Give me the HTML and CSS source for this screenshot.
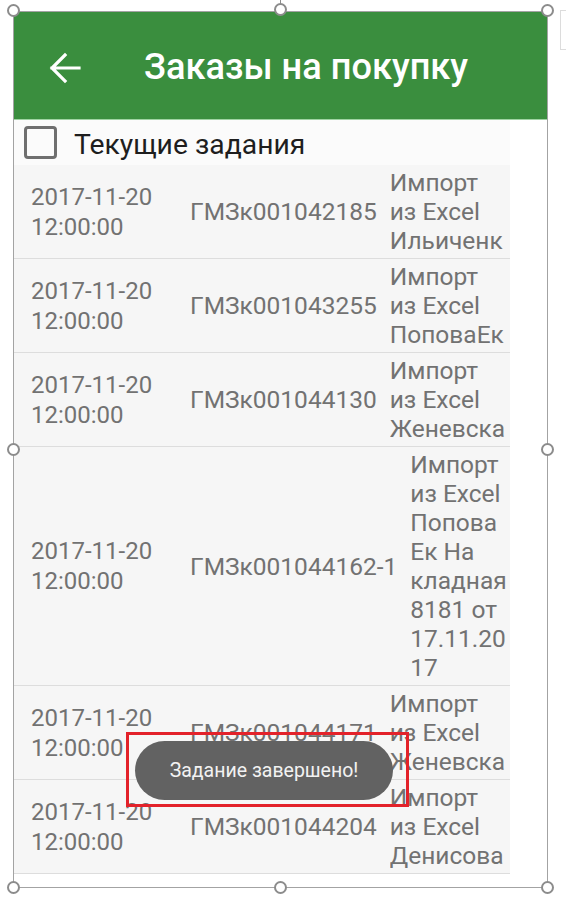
FILE: index.html
```html
<!DOCTYPE html>
<html lang="ru">
<head>
<meta charset="utf-8">
<link rel="stylesheet" href="styles.css">
</head>
<body>
<div class="stage">
  <div class="frame">
    <header class="appbar">
      <svg class="back" width="34" height="34" viewBox="0 0 34 34">
        <path d="M31 17H4M17 4L4 17L17 30" fill="none" stroke="#fff" stroke-width="3.2" stroke-linecap="square"/>
      </svg>
      <h1 class="title">Заказы на покупку</h1>
    </header>
    <div class="filter">
      <span class="checkbox"></span>
      <span class="filter-label">Текущие задания</span>
    </div>
    <div class="list">
      <div class="row">
        <div class="date">2017-11-20<br>12:00:00</div>
        <div class="num">ГМЗк001042185</div>
        <div class="desc">Импорт<br>из Excel<br>Ильиченк</div>
      </div>
      <div class="row">
        <div class="date">2017-11-20<br>12:00:00</div>
        <div class="num">ГМЗк001043255</div>
        <div class="desc">Импорт<br>из Excel<br>ПоповаЕк</div>
      </div>
      <div class="row">
        <div class="date">2017-11-20<br>12:00:00</div>
        <div class="num">ГМЗк001044130</div>
        <div class="desc">Импорт<br>из Excel<br>Женевска</div>
      </div>
      <div class="row">
        <div class="date">2017-11-20<br>12:00:00</div>
        <div class="num">ГМЗк001044162-1</div>
        <div class="desc">Импорт<br>из Excel<br>Попова<br>Ек На<br>кладная<br>8181 от<br>17.11.20<br>17</div>
      </div>
      <div class="row">
        <div class="date">2017-11-20<br>12:00:00</div>
        <div class="num">ГМЗк001044171</div>
        <div class="desc">Импорт<br>из Excel<br>Женевска</div>
      </div>
      <div class="row">
        <div class="date">2017-11-20<br>12:00:00</div>
        <div class="num">ГМЗк001044204</div>
        <div class="desc">Импорт<br>из Excel<br>Денисова</div>
      </div>
    </div>
  </div>

  <div class="toast-mark">
    <div class="toast">Задание завершено!</div>
  </div>

  <span class="rot-line"></span>
  <span class="handle h-tl"></span>
  <span class="handle h-tm"></span>
  <span class="handle h-tr"></span>
  <span class="handle h-ml"></span>
  <span class="handle h-mr"></span>
  <span class="handle h-bl"></span>
  <span class="handle h-bm"></span>
  <span class="handle h-br"></span>
  <span class="side-box"></span>
</div>
</body>
</html>
```

FILE: styles.css
```css
* { box-sizing: border-box; }
html, body { margin: 0; padding: 0; background: #fff; }
body { font-family: Roboto, "Noto Sans", "Liberation Sans", sans-serif; }

.stage { position: relative; width: 566px; height: 900px; overflow: hidden; background: #fff; }

.frame {
  margin: 11px 0 0 13px;
  width: 535px;
  height: 877px;
  border: 1px solid #a3a3a3;
  background: #fff;
  overflow: hidden;
}

.appbar {
  height: 108px;
  background: #3a8e3e;
  border-bottom: 1px solid #9fd3a2;
  display: flex;
  align-items: center;
  padding-left: 34px;
}
.back { display: block; flex: none; margin-top: 4px; }
.title {
  margin: 2px 0 0 62px;
  color: #fff;
  font-size: 36.2px;
  font-weight: 500;
  line-height: 44px;
}

.filter {
  height: 45px;
  display: flex;
  align-items: center;
  padding-left: 10px;
  width: 496px;
  background: #fbfbfb;
}
.checkbox {
  width: 33px; height: 33px;
  border: 3px solid #6f6f6f;
  border-radius: 4px;
  flex: none;
}
.filter-label {
  margin-left: 17px;
  margin-top: 4px;
  font-size: 28.3px;
  color: #1e1e1e;
}

.list { width: 496px; }
.row {
  display: flex;
  align-items: center;
  background: #f6f6f6;
  border-bottom: 1px solid #dddddd;
  padding: 3px 0 3px;
  color: #727272;
  font-size: 24.5px;
  line-height: 29px;
}
.date { width: 176px; flex: none; padding-left: 17px; line-height: 30px; font-size: 24px; }
.num { flex: none; white-space: nowrap; padding-right: 13px; }
.desc { flex: 1; min-width: 0; white-space: nowrap; overflow: hidden; }

.toast-mark {
  position: absolute;
  left: 126px; top: 732px;
  width: 283px; height: 75px;
  border: 3px solid #e3222a;
  padding: 6px 0 0 6px;
}
.toast {
  width: 258px; height: 59px;
  border-radius: 30px;
  background: #626262;
  color: #f2f2f2;
  font-size: 19.5px;
  display: flex;
  align-items: center;
  justify-content: center;
}

.handle {
  position: absolute;
  width: 13px; height: 13px;
  border: 2px solid #8c8c8c;
  border-radius: 50%;
  background: #fff;
}
.h-tl { left: 7px; top: 4px; }
.h-tm { left: 274px; top: 3px; }
.h-tr { left: 541px; top: 4px; }
.h-ml { left: 7px; top: 443px; }
.h-mr { left: 541px; top: 443px; }
.h-bl { left: 7px; top: 881px; }
.h-bm { left: 274px; top: 881px; }
.h-br { left: 541px; top: 881px; }
.rot-line { position: absolute; left: 280px; top: 0; width: 1px; height: 4px; background: #8c8c8c; }
.side-box {
  position: absolute;
  left: 560px; top: 10px;
  width: 10px; height: 40px;
  border: 1px solid #dcdcdc;
}
```
